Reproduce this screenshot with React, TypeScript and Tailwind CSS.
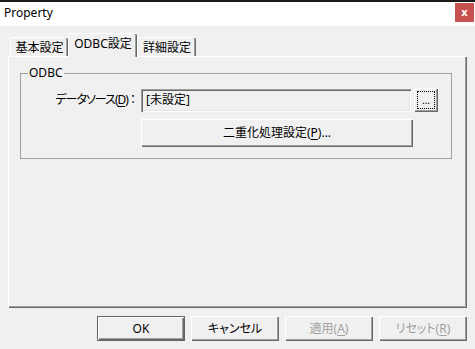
import React from "react";

const raised =
  "shadow-[inset_1px_1px_#ffffff,inset_-1px_-1px_#696969,inset_-2px_-2px_#a0a0a0]";

const Mn = ({ c }: { c: string }) => <span className="underline underline-offset-2">{c}</span>;

const Button = ({
  children,
  className = "",
  disabled = false,
  isDefault = false,
}: {
  children: React.ReactNode;
  className?: string;
  disabled?: boolean;
  isDefault?: boolean;
}) => (
  <button
    className={`flex items-center justify-center bg-[#f0f0f0] text-[12px] leading-none ${raised} ${
      disabled ? "text-[#a0a0a0]" : "text-black"
    } ${isDefault ? "border border-[#646464]" : ""} ${className}`}
  >
    {children}
  </button>
);

const App = () => {
  const tabs = [
    { name: "基本設定", w: "w-[58px]", active: false },
    { name: "ODBC設定", w: "w-[69px]", active: true },
    { name: "詳細設定", w: "w-[59px]", active: false },
  ];

  return (
    <div className="w-[475px] h-[349px] bg-[#f0f0f0] flex flex-col text-black font-['Noto_Sans','Noto_Sans_CJK_JP',sans-serif] [font-feature-settings:'palt']">
      {/* title bar */}
      <div className="h-[26px] bg-white border-t-2 border-[#1a1a1a] flex items-start justify-between pl-[4px] pr-[1px]">
        <span className="text-[12px] leading-[22px]">Property</span>
        <div className="mt-[1px] w-[19px] h-[19px] bg-[#c75050] flex items-center justify-center text-white text-[11px] font-bold leading-none pb-[2px]">
          x
        </div>
      </div>

      <div className="px-[8px] pt-[7px]">
        {/* tabs */}
        <div className="flex items-end h-[23px] pl-[2px]">
          {tabs.map((t) => (
            <div
              key={t.name}
              className={`${t.w} flex items-center justify-center text-[12px] leading-none bg-[#f0f0f0] border-t border-l border-white rounded-t-[2px] shadow-[inset_-1px_0_#696969,inset_-2px_0_#a0a0a0] ${
                t.active ? "h-[24px] relative z-10 -mb-px pb-[3px]" : "h-[19px] pt-[1px]"
              }`}
            >
              {t.name}
            </div>
          ))}
        </div>

        {/* panel */}
        <div className="h-[252px] border-t border-l border-white shadow-[inset_-1px_-1px_#696969,inset_-2px_-2px_#a0a0a0]">
          <fieldset className="ml-[11px] mt-[9px] w-[432px] border border-[#a0a0a0] pt-[8px] pb-[11px]">
            <legend className="ml-[7px] px-[1px] text-[12px] leading-[14px]">ODBC</legend>
            <div className="flex items-center">
              <div className="w-[120px] pr-[6px] text-right text-[12px] leading-none tracking-[-1px]">
                データソース(<Mn c="D" />) ：
              </div>
              <div className="w-[270px] h-[23px] flex items-center pl-[5px] text-[12px] leading-none bg-[#f0f0f0] shadow-[inset_1px_1px_#a0a0a0,inset_2px_2px_#696969,inset_-1px_-1px_#ffffff,inset_-2px_-2px_#e3e3e3]">
                [未設定]
              </div>
              <Button className="ml-[3px] w-[24px] h-[24px] p-[3px]">
                <span className="w-full h-full border border-dotted border-black flex items-end justify-center pb-[3px] text-[10px] leading-none">
                  ...
                </span>
              </Button>
            </div>
            <Button className="ml-[120px] mt-[7px] w-[272px] h-[28px]">
              二重化処理設定(<Mn c="P" />)...
            </Button>
          </fieldset>
        </div>

        {/* buttons */}
        <div className="flex justify-end gap-[6px] mt-[8px]">
          <Button isDefault className="w-[88px] h-[25px]">
            OK
          </Button>
          <Button className="w-[88px] h-[25px]">キャンセル</Button>
          <Button disabled className="w-[88px] h-[25px]">
            適用(<Mn c="A" />)
          </Button>
          <Button disabled className="w-[88px] h-[25px]">
            リセット(<Mn c="R" />)
          </Button>
        </div>
      </div>
    </div>
  );
};

export default App;
